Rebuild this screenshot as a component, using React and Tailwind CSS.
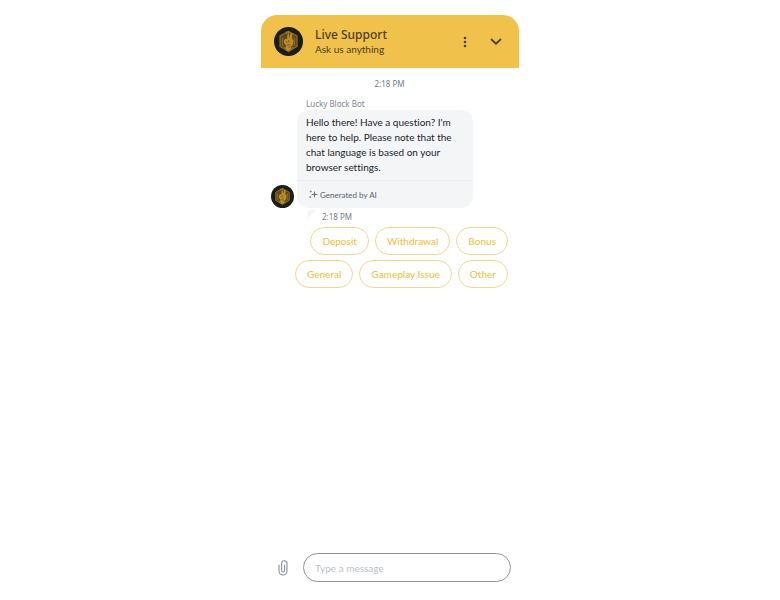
import { useState } from "react";

const quickReplies = [
  ["Deposit", "Withdrawal", "Bonus"],
  ["General", "Gameplay Issue", "Other"],
];

// BOT AVATAR
function BotAvatar({ className }) {
  return (
    <svg viewBox="0 0 58 58" className={className} aria-hidden="true">
      <circle cx="29" cy="29" r="29" fill="#1b1d1b" />
      <path d="M29 9 46 18v21L29 49 12 39V18z" fill="#5f4816" stroke="#8d6c22" strokeWidth="2.5" />
      <path d="M17 21v17M41 21v17M19 40l10 6 10-6" fill="none" stroke="#8d6c22" strokeWidth="2.5" />
      <path
        d="M20 26l4-3 2 2 1-10 3-1 1 9 2-11 4 1-1 11 3 2-1 9-4 5v5l-7 3-4-5 1-6-4-5z"
        fill="#b98c2c"
      />
      <path d="M24 28l3 4M29 26l1 5M26 37l7-2M29 41l4-2" stroke="#7a5c1c" strokeWidth="2" />
      <path d="M25 9l1 5M30 8l-1 5" stroke="#b98c2c" strokeWidth="2" />
    </svg>
  );
}

function DotsIcon() {
  return (
    <svg viewBox="0 0 4 12" className="w-1 h-3" fill="currentColor" aria-hidden="true">
      <circle cx="2" cy="2" r="1.3" />
      <circle cx="2" cy="6" r="1.3" />
      <circle cx="2" cy="10" r="1.3" />
    </svg>
  );
}

function ChevronIcon() {
  return (
    <svg viewBox="0 0 12 8" className="w-3 h-2" fill="none" stroke="currentColor" strokeWidth="1.8" aria-hidden="true">
      <path d="M1 1 6 5.700 11 1" />
    </svg>
  );
}

function SparkleIcon() {
  return (
    <svg viewBox="0 0 18 18" className="w-[9px] h-[9px]" fill="none" stroke="#6b7179" aria-hidden="true">
      <path d="M11 3v12M5 9h12" strokeWidth="1.8" />
      <path d="M11 5l1.500 2.500L15 9l-2.500 1.500L11 13l-1.500-2.500L7 9l2.500-1.500z" fill="#6b7179" stroke="none" />
      <path d="M3.500 1v4M1.500 3h4M2.500 12v4M.5 14h4" strokeWidth="1.4" />
    </svg>
  );
}

function ClipIcon() {
  return (
    <svg viewBox="0 0 10 16" className="w-[10px] h-4" fill="none" stroke="currentColor" strokeWidth="1.1" strokeLinecap="round" aria-hidden="true">
      <path d="M1 5v6a4 4 0 0 0 8 0V3.500a2.700 2.700 0 0 0-5.400 0V10.500a1.500 1.500 0 0 0 3 0V5" />
    </svg>
  );
}

export default function App() {
  const [message, setMessage] = useState("");

  return (
    <div className="min-h-screen bg-white flex justify-center pt-[15px] font-[Lato,sans-serif] [font-variant-ligatures:none]">
      <div className="w-full max-w-[258px] flex flex-col">

        {/* HEADER */}
        <header className="flex items-center bg-[#f0c24c] rounded-t-2xl pl-[13px] pr-[17px] py-3 text-[#4a401f]">
          <BotAvatar className="w-[29px] h-[29px] shrink-0" />
          <div className="ml-3 flex-1">
            <h1 className="font-['Noto_Sans',sans-serif] text-[12px] leading-[15px] font-medium">Live Support</h1>
            <p className="text-[10px] leading-[14px]">Ask us anything</p>
          </div>
          <button aria-label="Menu" className="mr-[23px]">
            <DotsIcon />
          </button>
          <button aria-label="Minimize">
            <ChevronIcon />
          </button>
        </header>

        {/* MESSAGES */}
        <main className="flex-1 pl-[10px] pr-[11px] pt-[9px]">
          <p className="font-['Noto_Sans',sans-serif] text-center text-[8px] leading-[14px] text-[#747b84]">2:18 PM</p>

          <p className="mt-[6px] ml-[35px] font-['Noto_Sans',sans-serif] text-[8px] leading-[13px] text-[#7d858f]">
            Lucky Block Bot
          </p>
          <div className="flex items-end gap-[3px]">
            <BotAvatar className="w-[23px] h-[23px] shrink-0" />
            <div className="w-[176px] bg-[#f4f5f7] rounded-xl">
              <p className="px-[9px] py-[5px] text-[10px] leading-[15px] text-[#202327]">
                Hello there! Have a question? I'm here to help. Please note that the chat language is based on your browser settings.
              </p>
              <div className="border-t border-[#e9ebee] px-3 h-[28px] flex items-center gap-[2px] text-[8px] text-[#595f67]">
                <SparkleIcon />
                Generated by AI
              </div>
            </div>
          </div>
          <div className="ml-[37px] mt-[2px] flex items-start gap-[6px]">
            <svg viewBox="0 0 8 8" className="w-2 h-2" aria-hidden="true">
              <path d="M0 0h8L0 8z" fill="#f4f5f7" />
            </svg>
            <p className="font-['Noto_Sans',sans-serif] text-[8px] leading-[14px] text-[#747b84]">2:18 PM</p>
          </div>

          {/* QUICK REPLIES */}
          <div className="mt-[3px] flex flex-col gap-[5px]">
            {quickReplies.map((row) => (
              <div key={row[0]} className="flex justify-end gap-[6px]">
                {row.map((label) => (
                  <button
                    key={label}
                    className="h-[28px] px-[11px] border border-[#f5d78b] rounded-full text-[10px] font-medium text-[#f0c24c] whitespace-nowrap"
                  >
                    {label}
                  </button>
                ))}
              </div>
            ))}
          </div>
        </main>

        {/* COMPOSER */}
        <footer className="flex items-center pl-[17px] pr-2 pb-[18px]">
          <button aria-label="Attach file" className="mr-[15px] text-[#8b939c]">
            <ClipIcon />
          </button>
          <input
            type="text"
            aria-label="Message"
            placeholder="Type a message"
            value={message}
            onChange={(e) => setMessage(e.target.value)}
            className="min-w-0 flex-1 h-[29px] px-[11px] border border-[#8f9296] rounded-full text-[10px] text-[#202327] placeholder:text-[#b9bfc6] outline-none"
          />
        </footer>

      </div>
    </div>
  );
}
